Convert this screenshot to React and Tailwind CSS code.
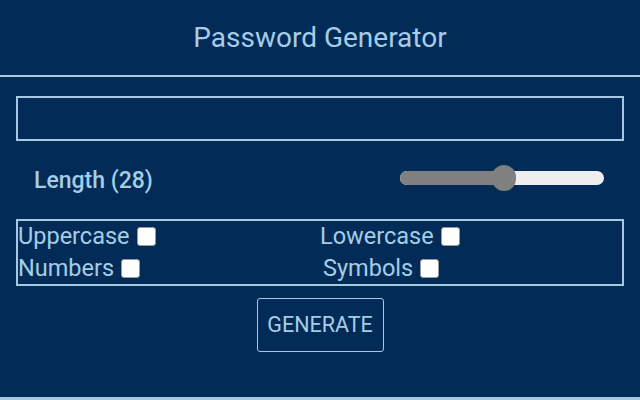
export default function App() {
  const txt = "text-[#a6cce6]";
  const Box = () => (
    <span className="inline-block w-[19px] h-[19px] bg-white rounded-[3px] border border-[#9a9a9a] ml-[7px]" />
  );
  return (
    <div
      className="w-[640px] h-[400px] bg-[#022c57] flex flex-col border-b-[3px] border-[#a6c8e0]"
      style={{ fontFamily: "Roboto, 'Noto Sans', sans-serif" }}
    >
      <div className={`h-[77px] border-b-2 border-[#a6c8e0] flex items-center justify-center text-[28px] ${txt}`}>
        Password Generator
      </div>
      <div className="px-4 pt-[19px]">
        <div className="h-[45px] border-2 border-[#a6c8e0]" />
      </div>
      <div className="h-[78px] px-4 flex items-center justify-between">
        <div className={`ml-[18px] mt-[3px] text-[23px] font-medium ${txt}`}>Length (28)</div>
        <div className="mr-[20px] mb-[4px] relative w-[204px] h-[14px] rounded-full bg-[#eeeeee]">
          <div className="absolute left-0 top-0 h-[14px] w-[104px] rounded-l-full bg-[#808080]" />
          <div className="absolute left-[92px] top-[-6px] w-[24px] h-[26px] rounded-full bg-[#808080]" />
        </div>
      </div>
      <div className="px-4">
        <div className={`h-[67px] border-2 border-[#a6c8e0] grid grid-cols-2 text-[23.5px] ${txt} leading-[31px]`}>
          <div className="flex items-center pl-0">Uppercase<Box /></div>
          <div className="flex items-center pl-0">Lowercase<Box /></div>
          <div className="flex items-center pl-0">Numbers<Box /></div>
          <div className="flex items-center pl-[3px]">Symbols<Box /></div>
        </div>
      </div>
      <div className="flex justify-center pt-[12px]">
        <div className={`w-[127px] h-[54px] border-[1.5px] border-[#a6c8e0] rounded-[3px] flex items-center justify-center text-[21.5px] ${txt}`}>
          GENERATE
        </div>
      </div>
    </div>
  );
}
